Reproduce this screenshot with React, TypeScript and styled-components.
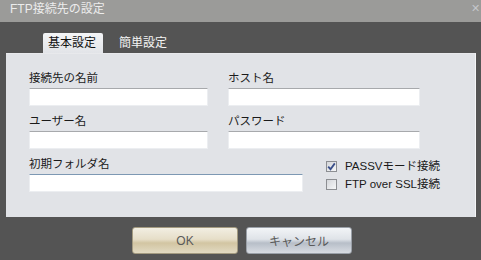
import React, { useState } from "react";
import styled, { createGlobalStyle } from "styled-components";

const GlobalStyle = createGlobalStyle`
  html, body {
    margin: 0;
    padding: 0;
    background: #545454;
  }
  * {
    box-sizing: border-box;
  }
`;

const FONT = `"Liberation Sans", "Noto Sans CJK JP", sans-serif`;

const Window = styled.div`
  width: 481px;
  height: 260px;
  background: #545454;
  display: flex;
  flex-direction: column;
  overflow: hidden;
  font-family: ${FONT};
`;

const TitleBar = styled.div`
  height: 22px;
  flex: none;
  background: #9b9b99;
  display: flex;
  align-items: flex-start;
  justify-content: space-between;
  padding: 2px 0 0 10px;
`;

const Title = styled.span`
  color: #ececec;
  font-size: 12px;
  line-height: 15px;
`;

const CloseGlyph = styled.span`
  color: #c4c6ca;
  font-size: 11px;
  line-height: 13px;
  margin-right: 1px;
`;

const Body = styled.div`
  flex: 1;
  display: flex;
  flex-direction: column;
  padding: 11px 5px 0 6px;
`;

const TabRow = styled.div`
  display: flex;
  align-items: flex-end;
  height: 20px;
  padding-left: 37px;
`;

const Tab = styled.button<{ $active: boolean }>`
  border: none;
  margin: 0;
  height: 20px;
  padding: 0 ${(p) => (p.$active ? "7px" : "16px")} 0 ${(p) => (p.$active ? "5px" : "16px")};
  border-radius: 2px 2px 0 0;
  background: ${(p) =>
    p.$active ? "linear-gradient(#f4f5f7, #e2e4e8)" : "transparent"};
  color: ${(p) => (p.$active ? "#111" : "#f4f4f4")};
  font-family: ${FONT};
  font-size: 12px;
  line-height: 20px;
  cursor: pointer;
`;

const Panel = styled.div`
  height: 164px;
  background: #e1e3e7;
  border-top: 1px solid #e8e9ec;
  border-right: 1px solid #f4f5f7;
  padding: 16px 0 0 23px;
  display: flex;
  flex-direction: column;
  gap: 7px;
`;

const Row = styled.div`
  display: flex;
  align-items: flex-start;
`;

const Field = styled.div<{ $width: number; $offset?: number }>`
  width: ${(p) => p.$width}px;
  margin-left: ${(p) => p.$offset ?? 0}px;
  display: flex;
  flex-direction: column;
  gap: 2px;
`;

const Label = styled.label`
  font-size: 11.5px;
  line-height: 16px;
  color: #1a1a1a;
  white-space: nowrap;
`;

const Input = styled.input<{ $focus?: boolean }>`
  height: 18px;
  width: 100%;
  background: #fff;
  border: 1px solid #eceef1;
  border-top: 1px solid ${(p) => (p.$focus ? "#7d98b3" : "#a7a9ac")};
  outline: none;
  padding: 0 3px;
  font-family: ${FONT};
  font-size: 11px;
`;

const Options = styled.div`
  margin-left: 23px;
  padding-top: 4px;
  display: flex;
  flex-direction: column;
  gap: 5px;
`;

const CheckRow = styled.label`
  display: flex;
  align-items: center;
  gap: 8px;
  font-size: 11.5px;
  line-height: 13px;
  color: #1a1a1a;
  cursor: pointer;
`;

const Box = styled.span`
  width: 11px;
  height: 11px;
  border: 1px solid #8c8e92;
  background: linear-gradient(135deg, #d4d6da, #f6f7f8);
  display: flex;
  align-items: center;
  justify-content: center;
`;

const ButtonRow = styled.div`
  display: flex;
  gap: 8px;
  padding: 10px 0 0 126px;
`;

const DialogButton = styled.button<{ $primary?: boolean }>`
  width: 106px;
  height: 27px;
  border: 1px solid ${(p) => (p.$primary ? "#a39a80" : "#9aa0a8")};
  border-radius: 3px;
  background: ${(p) =>
    p.$primary
      ? "linear-gradient(#f2eee2 0%, #e6dec8 45%, #d2c5a2 60%, #e2dac2 100%)"
      : "linear-gradient(#f2f4f7 0%, #dfe3e8 45%, #b7bec8 60%, #d8dce2 100%)"};
  color: #5a5a5a;
  font-family: ${FONT};
  font-size: 12px;
  cursor: pointer;
`;

const Check = () => (
  <svg width="9" height="9" viewBox="0 0 9 9">
    <path d="M1.2 4.6 L3.5 7.2 L7.8 1.4" fill="none" stroke="#3a4f8a" strokeWidth="1.8" />
  </svg>
);

export default function App() {
  const [tab, setTab] = useState(0);
  const [passive, setPassive] = useState(true);
  const [ssl, setSsl] = useState(false);

  return (
    <>
      <GlobalStyle />
      <Window>
        <TitleBar>
          <Title>FTP接続先の設定</Title>
          <CloseGlyph>✕</CloseGlyph>
        </TitleBar>
        <Body>
          <TabRow>
            <Tab $active={tab === 0} onClick={() => setTab(0)}>基本設定</Tab>
            <Tab $active={tab === 1} onClick={() => setTab(1)}>簡単設定</Tab>
          </TabRow>
          <Panel>
            <Row>
              <Field $width={179}>
                <Label>接続先の名前</Label>
                <Input />
              </Field>
              <Field $width={192} $offset={20}>
                <Label>ホスト名</Label>
                <Input />
              </Field>
            </Row>
            <Row>
              <Field $width={179}>
                <Label>ユーザー名</Label>
                <Input />
              </Field>
              <Field $width={192} $offset={20}>
                <Label>パスワード</Label>
                <Input />
              </Field>
            </Row>
            <Row>
              <Field $width={274}>
                <Label>初期フォルダ名</Label>
                <Input $focus />
              </Field>
              <Options>
                <CheckRow onClick={() => setPassive(!passive)}>
                  <Box>{passive && <Check />}</Box>
                  PASSVモード接続
                </CheckRow>
                <CheckRow onClick={() => setSsl(!ssl)}>
                  <Box>{ssl && <Check />}</Box>
                  FTP over SSL接続
                </CheckRow>
              </Options>
            </Row>
          </Panel>
          <ButtonRow>
            <DialogButton $primary>OK</DialogButton>
            <DialogButton>キャンセル</DialogButton>
          </ButtonRow>
        </Body>
      </Window>
    </>
  );
}
